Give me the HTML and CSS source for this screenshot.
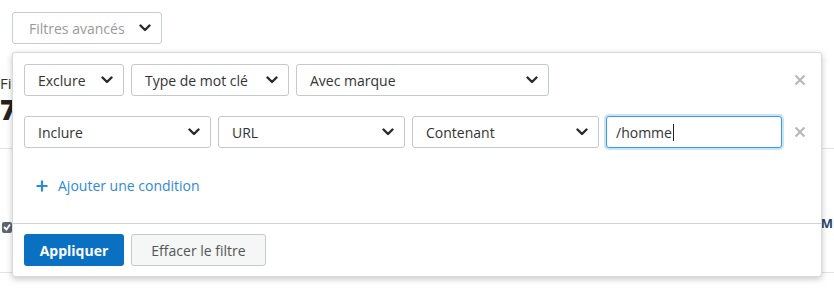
FILE: index.html
```html
<!DOCTYPE html>
<html lang="fr">
<head>
  <meta charset="UTF-8" />
  <title>Filtres avancés</title>
  <link rel="stylesheet" href="styles.css">
</head>
<body>
  <div class="toolbar">
    <button type="button" class="toggle-btn">
      <span>Filtres avancés</span>
      <svg class="chevron" viewBox="0 0 12 8" width="12" height="8"><polyline points="1.5,1.5 6,6 10.5,1.5" /></svg>
    </button>
  </div>

  <!-- contenu de la page, caché en partie par le panneau -->
  <div class="page">
    <div class="stat-label">Fichier</div>
    <div class="stat-value">7</div>
    <hr class="rule rule-first">
    <div class="table-head">
      <span class="check"><svg viewBox="0 0 10 10" width="10" height="10"><polyline points="2,5 4.5,7.5 8,2.5" /></svg></span>
      <span class="col-name">M</span>
    </div>
    <hr class="rule">
  </div>

  <div class="filter-panel">
    <div class="panel-body">
      <div class="cond-row">
        <div class="fields">
          <div class="select w-100">Exclure <svg class="chevron" viewBox="0 0 12 8" width="12" height="8"><polyline points="1.5,1.5 6,6 10.5,1.5" /></svg></div>
          <div class="select w-158">Type de mot clé <svg class="chevron" viewBox="0 0 12 8" width="12" height="8"><polyline points="1.5,1.5 6,6 10.5,1.5" /></svg></div>
          <div class="select w-253">Avec marque <svg class="chevron" viewBox="0 0 12 8" width="12" height="8"><polyline points="1.5,1.5 6,6 10.5,1.5" /></svg></div>
        </div>
        <button type="button" class="remove-btn"><svg viewBox="0 0 12 12" width="12" height="12"><path d="M1.5 1.5 L10.5 10.5 M10.5 1.5 L1.5 10.5" /></svg></button>
      </div>

      <div class="cond-row">
        <div class="fields">
          <div class="select w-187">Inclure <svg class="chevron" viewBox="0 0 12 8" width="12" height="8"><polyline points="1.5,1.5 6,6 10.5,1.5" /></svg></div>
          <div class="select w-186">URL <svg class="chevron" viewBox="0 0 12 8" width="12" height="8"><polyline points="1.5,1.5 6,6 10.5,1.5" /></svg></div>
          <div class="select w-186">Contenant <svg class="chevron" viewBox="0 0 12 8" width="12" height="8"><polyline points="1.5,1.5 6,6 10.5,1.5" /></svg></div>
          <div class="text-input w-175">/homme<span class="caret"></span></div>
        </div>
        <button type="button" class="remove-btn"><svg viewBox="0 0 12 12" width="12" height="12"><path d="M1.5 1.5 L10.5 10.5 M10.5 1.5 L1.5 10.5" /></svg></button>
      </div>

      <a class="add-link" href="#">
        <svg viewBox="0 0 12 12" width="12" height="12"><path d="M6 0.5 V11.5 M0.5 6 H11.5" /></svg>
        Ajouter une condition
      </a>
    </div>

    <div class="panel-footer">
      <button type="button" class="btn-apply">Appliquer</button>
      <button type="button" class="btn-clear">Effacer le filtre</button>
    </div>
  </div>
</body>
</html>
```

FILE: styles.css
```css
body {
  margin: 0;
  padding: 0;
  background: #fff;
  font-family: "Open Sans", Lato, Arial, sans-serif;
  font-size: 14px;
  color: #333;
}

.toolbar {
  padding: 12px 0 0 12px;
  height: 40px;
}

.toggle-btn {
  height: 32px;
  width: 150px;
  padding: 0 10px 0 16px;
  display: flex;
  align-items: center;
  justify-content: space-between;
  background: #fff;
  border: 1px solid #c8ccd0;
  border-radius: 3px;
  font-family: inherit;
  font-size: 14px;
  color: #9a9a9a;
}

.chevron {
  flex: none;
  fill: none;
  stroke: #2b2b2b;
  stroke-width: 2.4;
  stroke-linecap: round;
  stroke-linejoin: round;
}

/* contenu derrière */
.page {
  padding: 22px 0 0 0;
}

.stat-label {
  font-size: 15px;
  color: #333;
  line-height: 18px;
}

.stat-value {
  font-size: 28px;
  font-weight: 800;
  line-height: 30px;
  margin-top: 2px;
  color: #222;
}

.rule {
  border: none;
  border-top: 1px solid #e3e3e3;
  margin: 0;
}

.rule-first {
  margin-top: 24px;
}

.table-head {
  height: 123px;
  display: flex;
  align-items: center;
  justify-content: space-between;
  padding-top: 33px;
  box-sizing: border-box;
}

.check {
  width: 10px;
  height: 11px;
  margin-left: 2px;
  background: #5d6770;
  border-radius: 2px;
  display: flex;
  align-items: center;
  justify-content: center;
}

.check svg {
  fill: none;
  stroke: #fff;
  stroke-width: 1.8;
}

.col-name {
  font-weight: bold;
  color: #2a4a6b;
  font-size: 13px;
  margin: 0 1px 8px 0;
}

/* panneau de filtres */
.filter-panel {
  position: absolute;
  top: 52px;
  left: 12px;
  width: 810px;
  height: 225px;
  box-sizing: border-box;
  background: #fff;
  border: 1px solid #d9d9d9;
  border-radius: 3px;
  box-shadow: 0 2px 6px rgba(0, 0, 0, 0.22);
  display: flex;
  flex-direction: column;
}

.panel-body {
  padding: 11px 11px 0 11px;
  flex: 1;
  border-bottom: 1px solid #d2d2d2;
}

.cond-row {
  display: flex;
  align-items: center;
  margin-bottom: 20px;
}

.fields {
  display: flex;
  gap: 7px;
  flex: 1;
}

.select, .text-input {
  height: 32px;
  box-sizing: border-box;
  border: 1px solid #c6c9cc;
  border-radius: 3px;
  padding: 0 10px 0 13px;
  display: flex;
  align-items: center;
  justify-content: space-between;
  color: #333;
  background: #fff;
}

.text-input {
  justify-content: flex-start;
  padding-left: 9px;
  border-color: #3c9be4;
  box-shadow: 0 0 0 2px rgba(60, 155, 228, 0.28);
}

.caret {
  width: 1px;
  height: 17px;
  background: #222;
  margin-left: 1px;
}

.w-100 { width: 100px; }
.w-158 { width: 158px; }
.w-253 { width: 253px; }
.w-187 { width: 187px; }
.w-186 { width: 187px; }
.w-175 { width: 176px; }

.remove-btn {
  width: 20px;
  height: 28px;
  padding: 0;
  border: none;
  background: none;
  display: flex;
  align-items: center;
  justify-content: center;
}

.remove-btn svg {
  fill: none;
  stroke: #b8b8b8;
  stroke-width: 2.2;
}

.add-link {
  display: inline-flex;
  align-items: center;
  gap: 10px;
  margin: 8px 0 0 12px;
  color: #2d8ad6;
  text-decoration: none;
  font-size: 14px;
}

.add-link svg {
  fill: none;
  stroke: #2d8ad6;
  stroke-width: 2.2;
}

.panel-footer {
  padding: 10px 11px 10px 11px;
  display: flex;
  gap: 7px;
}

.btn-apply, .btn-clear {
  height: 32px;
  border-radius: 3px;
  font-family: inherit;
  font-size: 14px;
  cursor: pointer;
}

.btn-apply {
  width: 100px;
  background: #0a70c2;
  border: none;
  color: #fff;
  font-weight: bold;
}

.btn-clear {
  width: 135px;
  background: #f5f6f6;
  border: 1px solid #c6c9cc;
  color: #555;
}
```
